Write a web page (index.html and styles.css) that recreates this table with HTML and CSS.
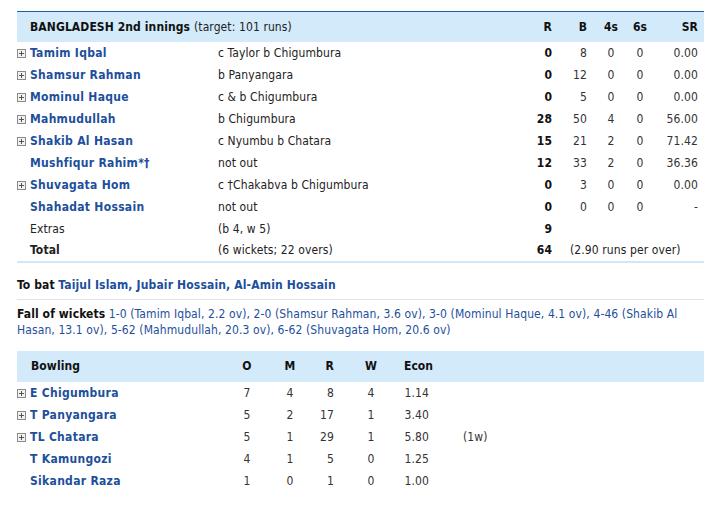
FILE: index.html
```html
<!DOCTYPE html>
<html>
<head>
<meta charset="utf-8">
<link rel="stylesheet" href="styles.css">
</head>
<body>
<div class="page">
  <table class="bat">
    <colgroup>
      <col class="c-name"><col class="c-dis"><col class="c-r"><col class="c-b"><col class="c-4"><col class="c-6"><col class="c-sr">
    </colgroup>
    <thead>
      <tr>
        <th class="name" colspan="2"><b>BANGLADESH 2nd innings</b> <span class="target">(target: 101 runs)</span></th>
        <th class="r">R</th><th class="b">B</th><th class="f">4s</th><th class="s">6s</th><th class="sr">SR</th>
      </tr>
    </thead>
    <tbody>
      <tr><td class="name"><span class="plus"></span><a>Tamim Iqbal</a></td><td class="dis">c Taylor b Chigumbura</td><td class="r">0</td><td class="b">8</td><td class="f">0</td><td class="s">0</td><td class="sr">0.00</td></tr>
      <tr><td class="name"><span class="plus"></span><a>Shamsur Rahman</a></td><td class="dis">b Panyangara</td><td class="r">0</td><td class="b">12</td><td class="f">0</td><td class="s">0</td><td class="sr">0.00</td></tr>
      <tr><td class="name"><span class="plus"></span><a>Mominul Haque</a></td><td class="dis">c &amp; b Chigumbura</td><td class="r">0</td><td class="b">5</td><td class="f">0</td><td class="s">0</td><td class="sr">0.00</td></tr>
      <tr><td class="name"><span class="plus"></span><a>Mahmudullah</a></td><td class="dis">b Chigumbura</td><td class="r">28</td><td class="b">50</td><td class="f">4</td><td class="s">0</td><td class="sr">56.00</td></tr>
      <tr><td class="name"><span class="plus"></span><a>Shakib Al Hasan</a></td><td class="dis">c Nyumbu b Chatara</td><td class="r">15</td><td class="b">21</td><td class="f">2</td><td class="s">0</td><td class="sr">71.42</td></tr>
      <tr><td class="name"><span class="noplus"></span><a>Mushfiqur Rahim*†</a></td><td class="dis">not out</td><td class="r">12</td><td class="b">33</td><td class="f">2</td><td class="s">0</td><td class="sr">36.36</td></tr>
      <tr><td class="name"><span class="plus"></span><a>Shuvagata Hom</a></td><td class="dis">c †Chakabva b Chigumbura</td><td class="r">0</td><td class="b">3</td><td class="f">0</td><td class="s">0</td><td class="sr">0.00</td></tr>
      <tr><td class="name"><span class="noplus"></span><a>Shahadat Hossain</a></td><td class="dis">not out</td><td class="r">0</td><td class="b">0</td><td class="f">0</td><td class="s">0</td><td class="sr">-</td></tr>
      <tr><td class="name plain"><span class="noplus"></span>Extras</td><td class="dis">(b 4, w 5)</td><td class="r">9</td><td></td><td></td><td></td><td></td></tr>
      <tr class="total"><td class="name plain"><span class="noplus"></span><b>Total</b></td><td class="dis">(6 wickets; 22 overs)</td><td class="r">64</td><td class="rpo" colspan="4">(2.90 runs per over)</td></tr>
    </tbody>
  </table>

  <div class="tobat"><b>To bat</b> <a>Taijul Islam, Jubair Hossain, Al-Amin Hossain</a></div>

  <div class="fow"><b>Fall of wickets</b> 1-0 (Tamim Iqbal, 2.2 ov), 2-0 (Shamsur Rahman, 3.6 ov), 3-0 (Mominul Haque, 4.1 ov), 4-46 (Shakib Al Hasan, 13.1 ov), 5-62 (Mahmudullah, 20.3 ov), 6-62 (Shuvagata Hom, 20.6 ov)</div>

  <table class="bowl">
    <colgroup>
      <col class="k-name"><col class="k-o"><col class="k-m"><col class="k-r"><col class="k-w"><col class="k-e"><col class="k-x">
    </colgroup>
    <thead>
      <tr><th class="name">Bowling</th><th class="o">O</th><th class="m">M</th><th class="r">R</th><th class="w">W</th><th class="e">Econ</th><th></th></tr>
    </thead>
    <tbody>
      <tr><td class="name"><span class="plus"></span><a>E Chigumbura</a></td><td class="o">7</td><td class="m">4</td><td class="r">8</td><td class="w">4</td><td class="e">1.14</td><td class="x"></td></tr>
      <tr><td class="name"><span class="plus"></span><a>T Panyangara</a></td><td class="o">5</td><td class="m">2</td><td class="r">17</td><td class="w">1</td><td class="e">3.40</td><td class="x"></td></tr>
      <tr><td class="name"><span class="plus"></span><a>TL Chatara</a></td><td class="o">5</td><td class="m">1</td><td class="r">29</td><td class="w">1</td><td class="e">5.80</td><td class="x">(1w)</td></tr>
      <tr><td class="name"><span class="noplus"></span><a>T Kamungozi</a></td><td class="o">4</td><td class="m">1</td><td class="r">5</td><td class="w">0</td><td class="e">1.25</td><td class="x"></td></tr>
      <tr><td class="name"><span class="noplus"></span><a>Sikandar Raza</a></td><td class="o">1</td><td class="m">0</td><td class="r">1</td><td class="w">0</td><td class="e">1.00</td><td class="x"></td></tr>
    </tbody>
  </table>
</div>
</body>
</html>
```

FILE: styles.css
```css
html, body {
  margin: 0;
  padding: 0;
  background: #ffffff;
}
body {
  font-family: "DejaVu Sans Condensed", "DejaVu Sans", Verdana, sans-serif;
  font-size: 12px;
  letter-spacing: 0.1px;
  color: #222;
}
.page {
  padding: 11px 7px 0 17px;
  width: 687px;
}
a {
  color: #1d4f9c;
  font-weight: bold;
  text-decoration: none;
  letter-spacing: 0.3px;
}
table {
  border-collapse: collapse;
  table-layout: fixed;
  width: 687px;
}
th, td {
  padding: 0;
  white-space: nowrap;
}
/* batting */
.c-name { width: 201px; }
.c-dis { width: 290px; }
.c-r { width: 48px; }
.c-b { width: 36px; }
.c-4 { width: 38px; }
.c-6 { width: 20px; }
.c-sr { width: 54px; }

.bat thead tr {
  background: #d3eafa;
  border-top: 1px solid #1f5ea8;
  height: 30px;
}
.bat th {
  font-weight: bold;
  color: #111;
  text-align: right;
}
.bat th.name {
  text-align: left;
  padding-left: 13px;
}
.target {
  font-weight: normal;
  color: #222;
}
.bat tbody tr {
  height: 22px;
}
.bat tbody tr.total {
  border-bottom: 2px solid #cfe7f8;
}
td.name {
  color: #222;
}
.plus, .noplus {
  display: inline-block;
  width: 9px;
  height: 9px;
  margin-right: 4px;
  vertical-align: -1px;
  box-sizing: border-box;
}
.plus {
  border: 1px solid #8a8a8a;
  background:
    linear-gradient(#555, #555) center / 5px 1px no-repeat,
    linear-gradient(#555, #555) center / 1px 5px no-repeat,
    #f2f2f2;
}
td.dis {
  color: #222;
}
.bat td.r {
  text-align: right;
  padding-right: 4px;
  font-weight: bold;
  color: #111;
}
.bat th.r { padding-right: 4px; }
.bat td.b, .bat th.b {
  text-align: right;
  padding-right: 5px;
  color: #333;
}
.bat th.b { color: #111; }
.bat td.f, .bat th.f, .bat td.s, .bat th.s {
  text-align: center;
  color: #333;
}
.bat th.f, .bat th.s { color: #111; }
.bat td.sr, .bat th.sr {
  text-align: right;
  padding-right: 6px;
  color: #333;
}
.bat th.sr { color: #111; }
.bat td.rpo {
  padding-left: 14px;
  color: #222;
}

.tobat {
  padding: 15px 0 7px 0;
  border-bottom: 1px solid #e3e3e3;
  color: #222;
}
.tobat b { color: #111; }
.tobat a { letter-spacing: 0.15px; }
.fow {
  padding: 6px 10px 13px 0;
  line-height: 16px;
  color: #1d4f9c;
}
.fow b { color: #111; }

/* bowling */
.k-name { width: 213px; }
.k-o { width: 34px; }
.k-m { width: 52px; }
.k-r { width: 22px; }
.k-w { width: 66px; }
.k-e { width: 29px; }
.k-x { width: 271px; }

.bowl thead tr {
  background: #d3eafa;
  height: 31px;
}
.bowl th {
  font-weight: bold;
  color: #111;
}
.bowl th.name {
  text-align: left;
  padding-left: 14px;
}
.bowl tbody tr { height: 22px; }
.bowl .o, .bowl .m, .bowl .w { text-align: center; color: #333; }
.bowl .r, .bowl .e { text-align: right; padding-right: 4px; color: #333; }
.bowl th.e { padding-right: 2px; letter-spacing: 0; }
.bowl th.o, .bowl th.m, .bowl th.w, .bowl th.r, .bowl th.e { color: #111; }
.bowl td.x { padding-left: 30px; color: #333; }
```
